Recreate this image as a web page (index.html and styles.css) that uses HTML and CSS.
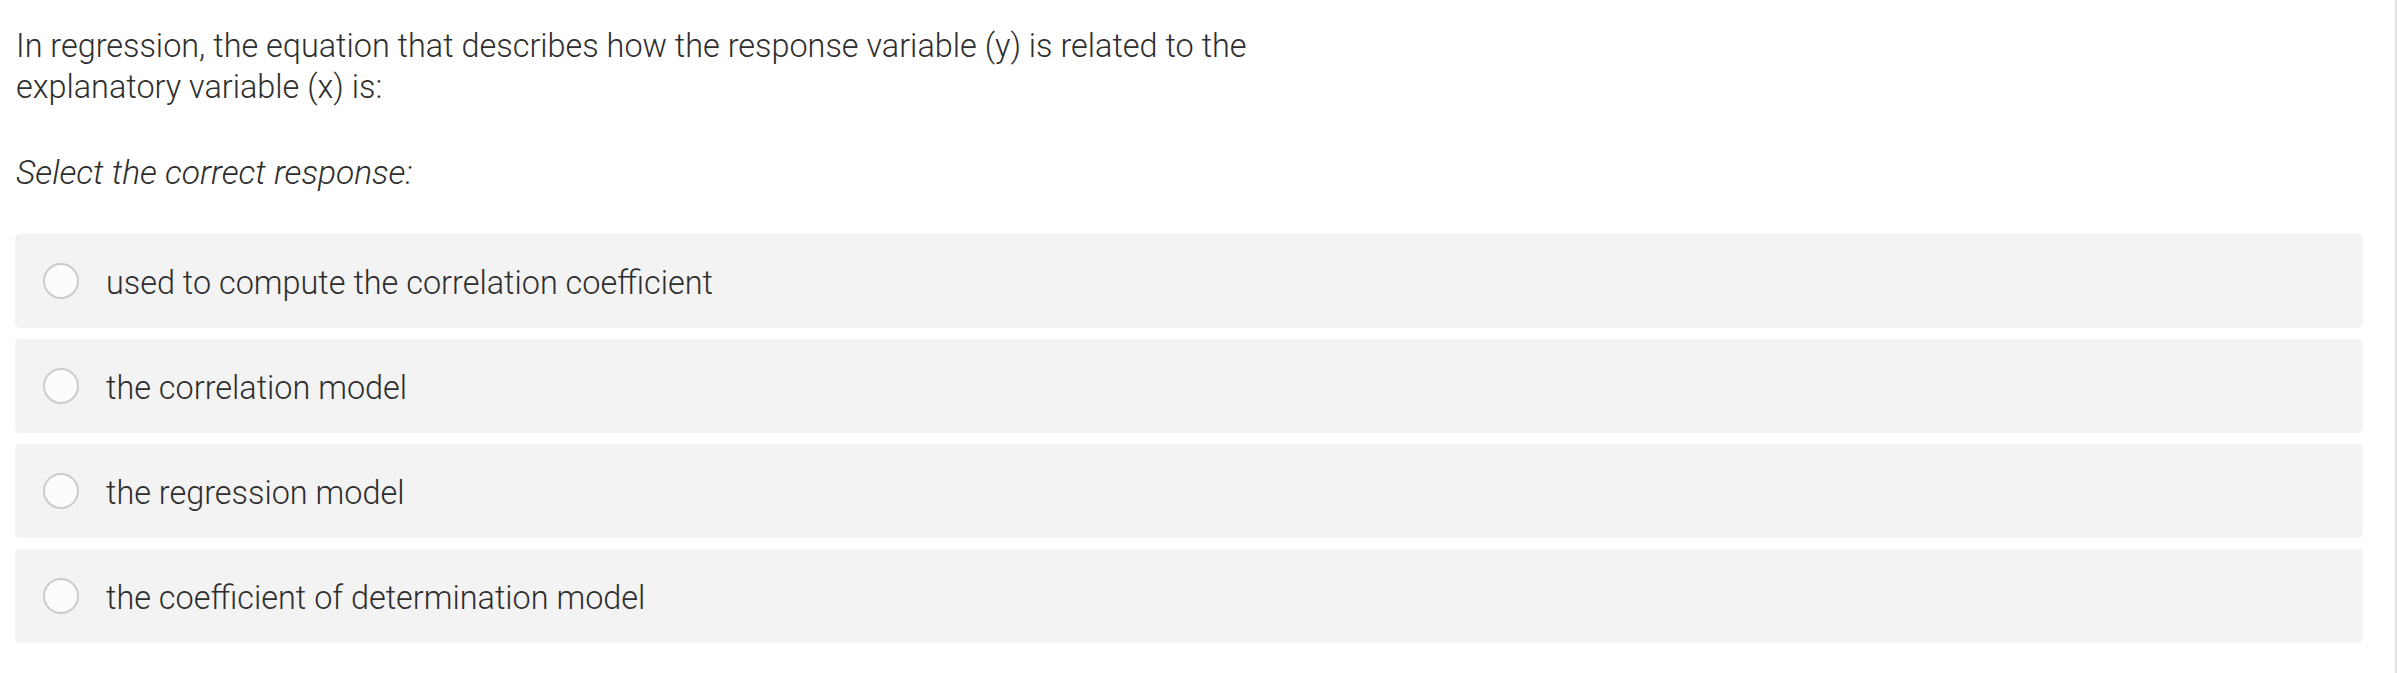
FILE: index.html
```html
<!DOCTYPE html>
<html lang="en">
<head>
<meta charset="utf-8">
<title>Question</title>
<link rel="stylesheet" href="styles.css">
</head>
<body>
<div class="page">
  <p class="question">In regression, the equation that describes how the response variable (y) is related to the<br>explanatory variable (x) is:</p>
  <p class="prompt">Select the correct response:</p>
  <div class="options">
    <label class="option"><span class="radio"></span><span class="label">used to compute the correlation coefficient</span></label>
    <label class="option"><span class="radio"></span><span class="label">the correlation model</span></label>
    <label class="option"><span class="radio"></span><span class="label">the regression model</span></label>
    <label class="option"><span class="radio"></span><span class="label">the coefficient of determination model</span></label>
  </div>
</div>
</body>
</html>
```
FILE: styles.css
```css
html, body {
  margin: 0;
  padding: 0;
  background: #ffffff;
}
body {
  font-family: Roboto, "Liberation Sans", sans-serif;
  font-weight: 300;
  color: #2e2e2e;
  font-size: 32.4px;
  line-height: 41px;
}
.page {
  box-sizing: border-box;
  width: 2397px;
  min-height: 673px;
  padding: 26px 32px 0 15px;
  border-right: 2px solid #e2e2e2;
}
.question {
  margin: 0;
  padding-left: 1px;
}
.prompt {
  margin: 44px 0 0 0;
  padding-left: 1px;
  font-style: italic;
  font-size: 33.6px;
}
.options {
  display: flex;
  flex-direction: column;
  gap: 11px;
  margin-top: 41px;
}
.option {
  display: flex;
  align-items: center;
  height: 94px;
  background: #f3f3f3;
  border-radius: 5px;
  padding-left: 28px;
  box-sizing: border-box;
}
.radio {
  box-sizing: border-box;
  width: 36px;
  height: 36px;
  border-radius: 50%;
  border: 2px solid #cccccc;
  background: #fcfcfc;
  flex: none;
}
.label {
  margin-left: 27px;
  padding-top: 5px;
}
```
